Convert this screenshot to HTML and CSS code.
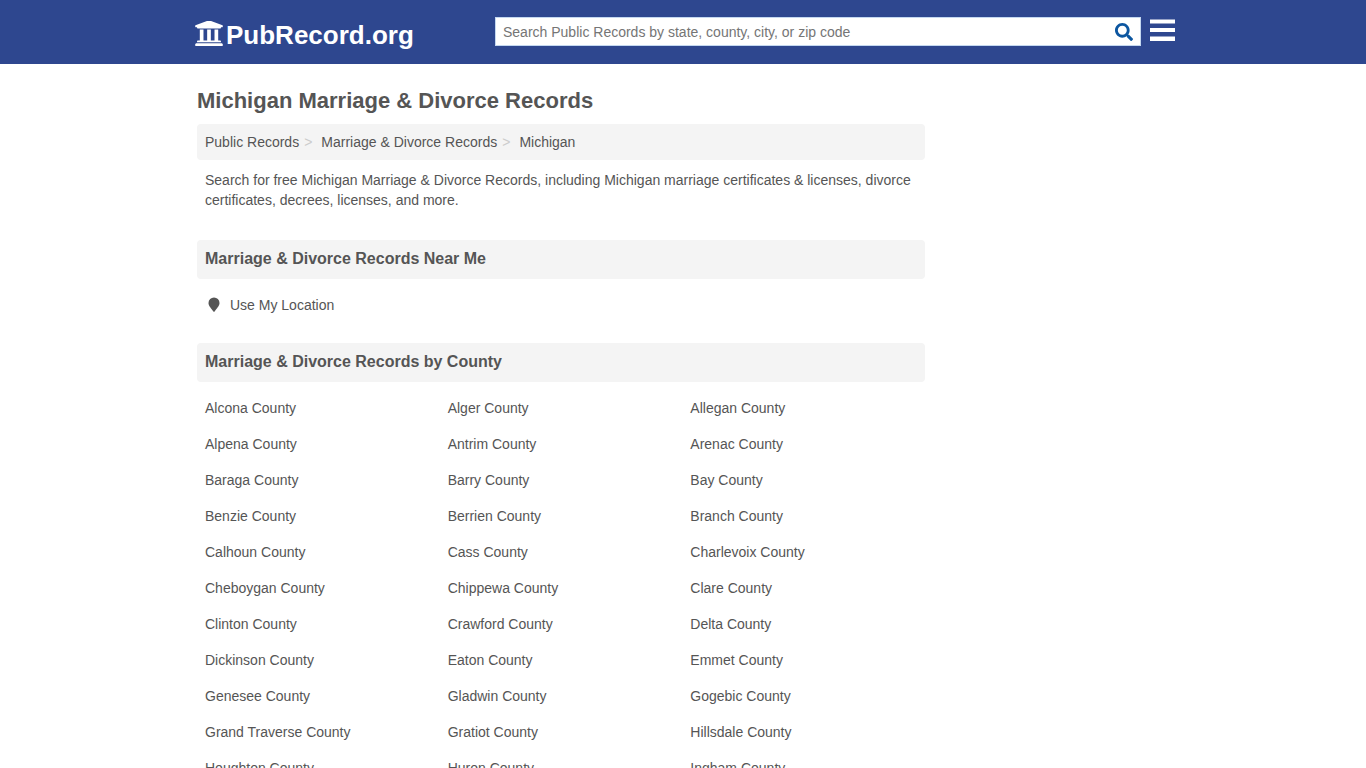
FILE: index.html
```html
<!DOCTYPE html>
<html lang="en">
<head>
<meta charset="utf-8">
<meta name="viewport" content="width=device-width, initial-scale=1">
<title>Michigan Marriage &amp; Divorce Records</title>
<link rel="stylesheet" href="styles.css">
</head>
<body>
<header class="site-header">
  <div class="header-inner">
    <a class="logo" href="#">
      <svg class="logo-icon" viewBox="16 45 480 435" aria-hidden="true">
        <path fill="currentColor" d="M496 128v16a8 8 0 0 1-8 8h-24v12c0 6.627-5.373 12-12 12H60c-6.627 0-12-5.373-12-12v-12H24a8 8 0 0 1-8-8v-16a8 8 0 0 1 4.941-7.392l232-88a7.996 7.996 0 0 1 6.118 0l232 88A8 8 0 0 1 496 128zm-24 304H40c-13.255 0-24 10.745-24 24v16a8 8 0 0 0 8 8h464a8 8 0 0 0 8-8v-16c0-13.255-10.745-24-24-24zM96 192v192H60c-6.627 0-12 5.373-12 12v20h416v-20c0-6.627-5.373-12-12-12h-36V192h-64v192h-64V192h-64v192h-64V192H96z"/>
      </svg>
      <span>PubRecord.org</span>
    </a>
    <form class="search" role="search">
      <input class="search-input" type="text" aria-label="Search public records" placeholder="Search Public Records by state, county, city, or zip code">
      <button class="search-button" type="submit" aria-label="Search">
        <svg class="search-icon" viewBox="0 0 512 512" aria-hidden="true"><path fill="currentColor" d="M505 442.700L405.300 343c-4.500-4.500-10.600-7-17-7H372c27.600-35.300 44-79.700 44-128C416 93.100 322.900 0 208 0S0 93.100 0 208s93.100 208 208 208c48.300 0 92.700-16.400 128-44v16.300c0 6.400 2.500 12.500 7 17l99.700 99.700c9.400 9.400 24.600 9.400 33.900 0l28.300-28.300c9.400-9.400 9.400-24.600.1-34zM208 336c-70.700 0-128-57.200-128-128 0-70.700 57.200-128 128-128 70.700 0 128 57.200 128 128 0 70.700-57.200 128-128 128z"/></svg>
      </button>
    </form>
    <button class="menu-button" type="button" aria-label="Menu">
      <svg class="menu-icon" viewBox="0 0 25 22" aria-hidden="true"><path fill="currentColor" d="M0 .5h25v4H0zM0 9h25v4H0zM0 17.500h25v4.500H0z"/></svg>
    </button>
  </div>
</header>
<div class="page">
  <main class="content">
    <h1 class="title">Michigan Marriage &amp; Divorce Records</h1>
    <nav aria-label="Breadcrumb">
      <ol class="breadcrumb">
        <li><a href="#">Public Records</a></li>
        <li><a href="#">Marriage &amp; Divorce Records</a></li>
        <li><a href="#">Michigan</a></li>
      </ol>
    </nav>
    <p class="intro">Search for free Michigan Marriage &amp; Divorce Records, including Michigan marriage certificates &amp; licenses, divorce certificates, decrees, licenses, and more.</p>
    <section class="section">
      <h2 class="section-title">Marriage &amp; Divorce Records Near Me</h2>
      <ul class="links">
        <li><a class="location" href="#"><svg class="pin" viewBox="0 0 12 16" aria-hidden="true"><path fill="currentColor" d="M6 0.500a5.500 5.500 0 0 1 5.500 5.500c0 2.200-1 3.400-4.700 8.300a1 1 0 0 1-1.600 0C1.500 9.400.5 8.200.5 6A5.500 5.500 0 0 1 6 .5z"/></svg>Use My Location</a></li>
      </ul>
    </section>
    <section class="section">
      <h2 class="section-title">Marriage &amp; Divorce Records by County</h2>
      <ul class="links">
        <li><a href="#">Alcona County</a></li><li><a href="#">Alger County</a></li><li><a href="#">Allegan County</a></li>
        <li><a href="#">Alpena County</a></li><li><a href="#">Antrim County</a></li><li><a href="#">Arenac County</a></li>
        <li><a href="#">Baraga County</a></li><li><a href="#">Barry County</a></li><li><a href="#">Bay County</a></li>
        <li><a href="#">Benzie County</a></li><li><a href="#">Berrien County</a></li><li><a href="#">Branch County</a></li>
        <li><a href="#">Calhoun County</a></li><li><a href="#">Cass County</a></li><li><a href="#">Charlevoix County</a></li>
        <li><a href="#">Cheboygan County</a></li><li><a href="#">Chippewa County</a></li><li><a href="#">Clare County</a></li>
        <li><a href="#">Clinton County</a></li><li><a href="#">Crawford County</a></li><li><a href="#">Delta County</a></li>
        <li><a href="#">Dickinson County</a></li><li><a href="#">Eaton County</a></li><li><a href="#">Emmet County</a></li>
        <li><a href="#">Genesee County</a></li><li><a href="#">Gladwin County</a></li><li><a href="#">Gogebic County</a></li>
        <li><a href="#">Grand Traverse County</a></li><li><a href="#">Gratiot County</a></li><li><a href="#">Hillsdale County</a></li>
        <li><a href="#">Houghton County</a></li><li><a href="#">Huron County</a></li><li><a href="#">Ingham County</a></li>
      </ul>
    </section>
  </main>
</div>
</body>
</html>
```
FILE: styles.css
```css
* { box-sizing: border-box; }
body {
  margin: 0;
  background: #fff;
  color: #555;
  font: 14px/20px "Liberation Sans", Arial, sans-serif;
}
a { color: inherit; text-decoration: none; }
ul, ol { list-style: none; margin: 0; padding: 0; }
svg { display: block; }

.site-header { background: #2e478f; color: #fff; }
.header-inner {
  display: flex;
  align-items: flex-start;
  max-width: 984px;
  margin: 0 auto;
  padding: 17px 0 14px 4px;
}
.logo {
  display: flex;
  align-items: flex-start;
  gap: 3px;
  width: 300px;
  padding-top: 3px;
  font-size: 26px;
  font-weight: bold;
  line-height: 30px;
}
.logo-icon { width: 28px; height: 25px; margin-top: 1px; }
.search {
  display: flex;
  flex: 1;
  height: 29px;
  background: #fff;
  border: 1px solid #c4d8f0;
}
.search-input {
  flex: 1;
  min-width: 0;
  padding: 0 7px;
  border: 0;
  background: none;
  color: #555;
  font: inherit;
}
.search-input::placeholder { color: #757575; }
.search-button, .menu-button {
  padding: 0;
  border: 0;
  background: none;
  cursor: pointer;
}
.search-button { padding: 0 7px; color: #0c56a0; }
.search-icon { width: 18px; height: 18px; }
.menu-button { margin-left: 9px; padding-top: 2px; color: #fff; }
.menu-icon { width: 25px; height: 22px; }

.page { max-width: 972px; margin: 0 auto; }
.content { max-width: 728px; padding-top: 21px; }
.title { margin: 0 0 7px; font-size: 22px; line-height: 32px; }
.breadcrumb {
  display: flex;
  flex-wrap: wrap;
  padding: 8px;
  border-radius: 4px;
  background: #f4f4f4;
}
.breadcrumb li + li::before { content: ">"; padding: 0 9px 0 5px; color: #ccc; }
.intro { margin: 0; padding: 10px 8px; }
.section { margin-top: 20px; }
.section-title {
  margin: 0 0 8px;
  padding: 9px 8px 10px;
  border-radius: 4px;
  background: #f4f4f4;
  font-size: 16px;
  line-height: 20px;
}
.links { display: grid; grid-template-columns: repeat(3, 1fr); }
.links a { display: block; padding: 8px; }
.links .location { display: flex; align-items: center; gap: 10px; padding-left: 11px; }
.pin { width: 12px; height: 16px; }
```
